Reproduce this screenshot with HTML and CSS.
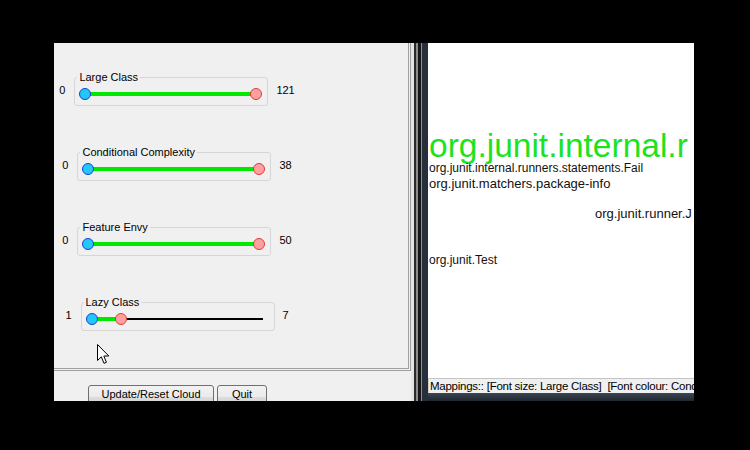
FILE: index.html
```html
<!DOCTYPE html>
<html>
<head>
<meta charset="utf-8">
<link rel="stylesheet" href="styles.css">
</head>
<body>
<div class="screen">
  <div class="left">
    <div class="sliders">
      <div class="rows">
        <div class="row">
          <span class="num">0</span>
          <fieldset class="group">
            <legend>Large Class</legend>
            <svg class="slider" width="192" height="14" viewBox="0 0 192 14">
              <line x1="10" y1="7" x2="181" y2="7" class="track-on"/>
              <circle cx="10" cy="7" r="5.5" class="knob-lo"/>
              <circle cx="181" cy="7" r="5.5" class="knob-hi"/>
            </svg>
          </fieldset>
          <span class="val">121</span>
        </div>
        <div class="row">
          <span class="num">0</span>
          <fieldset class="group">
            <legend>Conditional Complexity</legend>
            <svg class="slider" width="192" height="14" viewBox="0 0 192 14">
              <line x1="10" y1="7" x2="181" y2="7" class="track-on"/>
              <circle cx="10" cy="7" r="5.5" class="knob-lo"/>
              <circle cx="181" cy="7" r="5.5" class="knob-hi"/>
            </svg>
          </fieldset>
          <span class="val">38</span>
        </div>
        <div class="row">
          <span class="num">0</span>
          <fieldset class="group">
            <legend>Feature Envy</legend>
            <svg class="slider" width="192" height="14" viewBox="0 0 192 14">
              <line x1="10" y1="7" x2="181" y2="7" class="track-on"/>
              <circle cx="10" cy="7" r="5.5" class="knob-lo"/>
              <circle cx="181" cy="7" r="5.5" class="knob-hi"/>
            </svg>
          </fieldset>
          <span class="val">50</span>
        </div>
        <div class="row">
          <span class="num">1</span>
          <fieldset class="group">
            <legend>Lazy Class</legend>
            <svg class="slider" width="192" height="14" viewBox="0 0 192 14">
              <line x1="39" y1="7" x2="181" y2="7" class="track-off"/>
              <line x1="10" y1="7" x2="39" y2="7" class="track-on"/>
              <circle cx="10" cy="7" r="5.5" class="knob-lo"/>
              <circle cx="39" cy="7" r="5.5" class="knob-hi"/>
            </svg>
          </fieldset>
          <span class="val">7</span>
        </div>
      </div>
      <svg class="cursor" width="14" height="21" viewBox="0 0 14 21">
        <path d="M0.5 0.5 L0.5 16.5 L4.3 12.8 L7 19.3 L9.4 18.3 L6.8 12 L11.8 12 Z" fill="#fff" stroke="#000" stroke-width="1" stroke-linejoin="miter"/>
      </svg>
    </div>
    <div class="actions">
      <button class="btn btn-wide">Update/Reset Cloud</button>
      <button class="btn btn-quit">Quit</button>
    </div>
  </div>
  <div class="divider"></div>
  <div class="right">
    <div class="cloud">
      <div class="w w1">org.junit.internal.r</div>
      <div class="w w2">org.junit.internal.runners.statements.Fail</div>
      <div class="w w3">org.junit.matchers.package-info</div>
      <div class="w w4">org.junit.runner.J</div>
      <div class="w w5">org.junit.Test</div>
    </div>
    <div class="status">Mappings:: [Font size: Large Class]&nbsp; [Font colour: Conditional Complexity]</div>
    <div class="frame"></div>
  </div>
</div>
</body>
</html>
```

FILE: styles.css
```css
html, body {
  margin: 0;
  padding: 0;
}
body {
  background: #000;
  width: 750px;
  height: 450px;
  overflow: hidden;
  font-family: "Liberation Sans", Arial, sans-serif;
}
.screen {
  margin: 43px 0 0 54px;
  width: 640px;
  height: 358px;
  overflow: hidden;
  display: flex;
  background: #f0f0f0;
}
.left {
  width: 357px;
  flex: none;
  display: flex;
  flex-direction: column;
}
.sliders {
  position: relative;
  flex: none;
  box-sizing: border-box;
  height: 328px;
  padding-top: 28px;
  border-right: 3px double #a0a0a0;
  border-bottom: 3px double #a0a0a0;
}
.rows {
  width: 246px;
  display: flex;
  flex-direction: column;
  align-items: center;
  gap: 40px;
}
.row {
  display: flex;
  align-items: flex-start;
  font-size: 11px;
  line-height: 13px;
  color: #000;
}
.num {
  margin-top: 13px;
  margin-right: 9px;
}
.val {
  margin-top: 13px;
  margin-left: 8px;
}
.group {
  box-sizing: border-box;
  width: 194px;
  margin: 0;
  min-width: 0;
  padding: 3px 0 4px;
  border: 1px solid #d6d6d6;
  border-radius: 3px;
}
.group legend {
  margin-left: 2px;
  padding: 0 2px;
  font-size: 11px;
  line-height: 13px;
}
.slider {
  display: block;
}
.track-on {
  stroke: #00e800;
  stroke-width: 4;
}
.track-off {
  stroke: #000;
  stroke-width: 2;
}
.knob-lo {
  fill: #22c8f8;
  stroke: #1a3fd0;
  stroke-width: 1;
}
.knob-hi {
  fill: #ffa0a0;
  stroke: #e03a3a;
  stroke-width: 1;
}
.cursor {
  position: absolute;
  left: 43px;
  top: 301px;
}
.actions {
  flex: none;
  display: flex;
  gap: 3px;
  padding: 14px 0 0 34px;
}
.btn {
  box-sizing: border-box;
  flex: none;
  height: 23px;
  margin: 0;
  padding: 0 0 4px;
  border: 1px solid #707070;
  border-radius: 3px;
  background: linear-gradient(#f2f2f2 0%, #ebebeb 50%, #dddddd 51%, #cfcfcf 100%);
  font-family: "Liberation Sans", Arial, sans-serif;
  font-size: 11px;
  line-height: 13px;
  color: #000;
  text-align: center;
  vertical-align: top;
}
.btn-wide {
  width: 126px;
}
.btn-quit {
  width: 50px;
}
.divider {
  width: 17px;
  flex: none;
  background: linear-gradient(to right,
    #e4e4e4 0px, #e4e4e4 3px,
    #2a2a2a 3px, #2a2a2a 5px,
    #8c8c8c 5px, #8c8c8c 7px,
    #161616 7px, #161616 10px,
    #8a9099 10px, #8a9099 11px,
    #27303a 11px, #27303a 17px);
}
.right {
  width: 266px;
  flex: none;
  display: flex;
  flex-direction: column;
}
.cloud {
  flex: none;
  height: 335px;
  background: #fff;
  overflow: hidden;
  padding-left: 1px;
  color: #111;
  white-space: nowrap;
}
.w {
  font-family: "Liberation Sans", Arial, sans-serif;
}
.w1 {
  margin-top: 88px;
  font-size: 33.5px;
  line-height: 30px;
  color: #1ee21e;
}
.w2 {
  font-size: 12px;
  line-height: 15px;
}
.w3 {
  font-size: 13px;
  line-height: 15px;
}
.w4 {
  margin-top: 15px;
  padding-left: 166px;
  font-size: 13px;
  line-height: 15px;
}
.w5 {
  margin-top: 32px;
  font-size: 12px;
  line-height: 15px;
}
.status {
  flex: none;
  box-sizing: border-box;
  height: 15px;
  border-top: 1px solid #c4c4c4;
  border-left: 1px solid #d0d0d0;
  background: #f0f0f0;
  padding-left: 1px;
  font-size: 11.5px;
  line-height: 14px;
  letter-spacing: -0.25px;
  color: #000;
  white-space: nowrap;
  overflow: hidden;
}
.frame {
  flex: 1;
  background: linear-gradient(#3c4754, #1f262f);
}
```
